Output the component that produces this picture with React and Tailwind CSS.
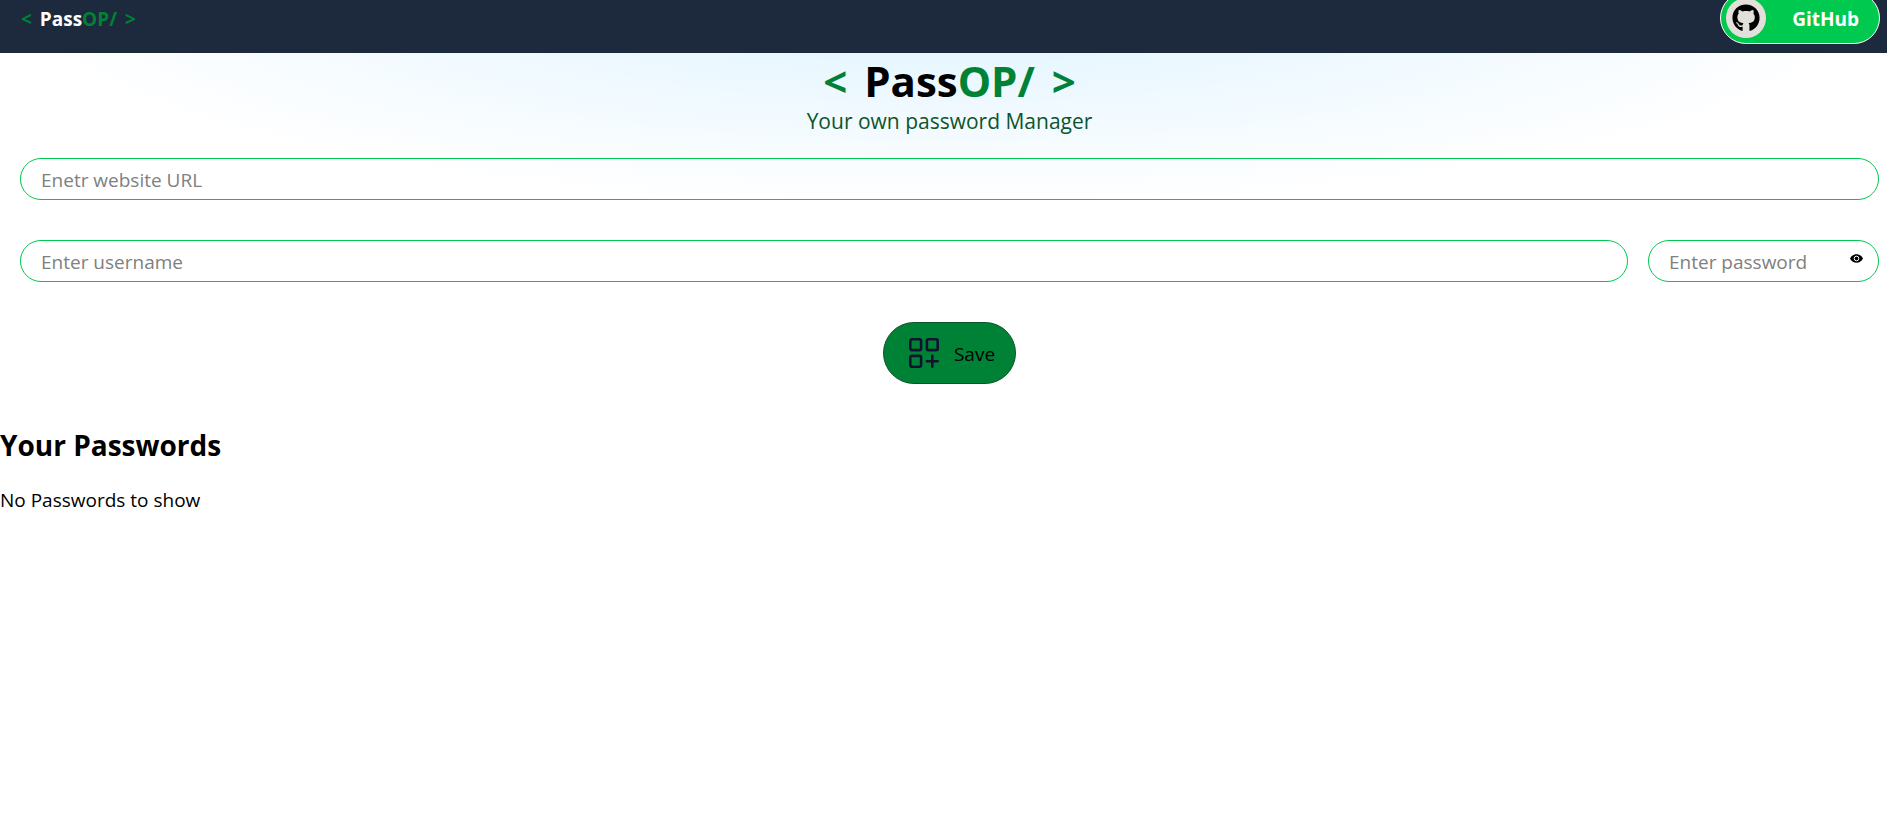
import React, { useState } from "react";
import { FaGithub } from "react-icons/fa";

const fieldClass =
  "block h-[42px] w-full rounded-full border border-[#00c950] bg-transparent px-5 pt-0.5 text-[19px] text-black placeholder:text-[#808080] outline-none focus:ring-1 focus:ring-[#00c950]";

function Logo({ passClass, leftClass, rightClass }) {
  return (
    <>
      <span className={`text-[#008236] ${leftClass}`}>&lt; </span>
      <span className={passClass}>Pass</span>
      <span className="text-[#008236]">OP/</span>
      <span className={`text-[#008236] ${rightClass}`}> &gt;</span>
    </>
  );
}

function Navbar() {
  return (
    <nav className="flex h-[53px] items-start justify-between bg-[#1d293d] pr-[7px] pl-[21px]">
      <div className="pt-1 text-[19px] leading-[30px] font-bold">
        <Logo passClass="text-white" leftClass="mr-[3px]" rightClass="ml-[3px]" />
      </div>
      <button
        type="button"
        className="-mt-2 flex h-[52px] w-40 items-center justify-between rounded-full border border-white bg-[#00c950] pr-5 pl-[5px] text-[19px] font-bold text-white"
      >
        <span className="flex size-10 items-center justify-center rounded-full bg-[#e3e0db]">
          <FaGithub className="size-7 text-black" aria-hidden="true" />
        </span>
        <span className="pt-0.5">GitHub</span>
      </button>
    </nav>
  );
}

function SaveIcon() {
  return (
    <svg
      className="size-[30px] text-[#121331]"
      viewBox="0 0 30 30"
      fill="none"
      stroke="currentColor"
      strokeWidth="2.6"
      strokeLinecap="round"
      aria-hidden="true"
    >
      <rect x="1.3" y="1.3" width="10.8" height="10.8" rx="1.6" />
      <rect x="17.9" y="1.3" width="10.8" height="10.8" rx="1.6" />
      <rect x="1.3" y="17.9" width="10.8" height="10.8" rx="1.6" />
      <path d="M23.3 17.9v10.8M17.9 23.3h10.8" />
    </svg>
  );
}

function EyeIcon() {
  return (
    <svg className="h-[9px] w-[13px]" viewBox="0 0 26 18" aria-hidden="true">
      <path d="M0 9C3 3 8 0.5 13 0.5S23 3 26 9C23 15 18 17.5 13 17.5S3 15 0 9Z" fill="black" />
      <circle cx="13" cy="9" r="4.6" fill="black" stroke="white" strokeWidth="2" />
    </svg>
  );
}

function PasswordForm() {
  const [visible, setVisible] = useState(false);
  return (
    <form
      className="flex flex-col items-center gap-10 pt-5 pr-2 pl-5"
      onSubmit={(e) => e.preventDefault()}
    >
      <input type="text" name="site" aria-label="Website URL" placeholder="Enetr website URL" className={fieldClass} />
      <div className="flex w-full gap-5">
        <div className="grow">
          <input type="text" name="username" aria-label="Username" placeholder="Enter username" className={fieldClass} />
        </div>
        <div className="relative w-[231px] shrink-0">
          <input
            type={visible ? "text" : "password"}
            name="password"
            aria-label="Password"
            placeholder="Enter password"
            className={fieldClass}
          />
          <button
            type="button"
            aria-label="Show password"
            onClick={() => setVisible(!visible)}
            className="absolute top-3.5 right-4 flex"
          >
            <EyeIcon />
          </button>
        </div>
      </div>
      <button
        type="submit"
        className="flex h-[62px] items-center gap-[15px] rounded-full border border-[#0d542b] bg-[#008236] pr-5 pl-[25px] text-[19px] text-black"
      >
        <SaveIcon />
        <span className="pt-0.5">Save</span>
      </button>
    </form>
  );
}

export default function App() {
  return (
    <div className="min-h-screen bg-white bg-[radial-gradient(100%_50%_at_50%_0%,rgba(0,163,255,0.13)_0,rgba(0,163,255,0)_50%,rgba(0,163,255,0)_100%)] font-['Open_Sans','Noto_Sans',sans-serif] text-black">
      <Navbar />
      <main>
        <header className="pt-1 pr-2 pl-5 text-center">
          <h1 className="text-[42px] leading-[48px] font-bold">
            <Logo passClass="text-black" leftClass="mr-1.5" rightClass="ml-1.5" />
          </h1>
          <p className="text-[21px] leading-[33px] text-[#0d542b]">Your own password Manager</p>
        </header>
        <PasswordForm />
        <section className="pt-[41px]">
          <h2 className="text-[28px] leading-10 font-bold">Your Passwords</h2>
          <p className="pt-5 text-[19px] leading-[30px]">No Passwords to show</p>
        </section>
      </main>
    </div>
  );
}
